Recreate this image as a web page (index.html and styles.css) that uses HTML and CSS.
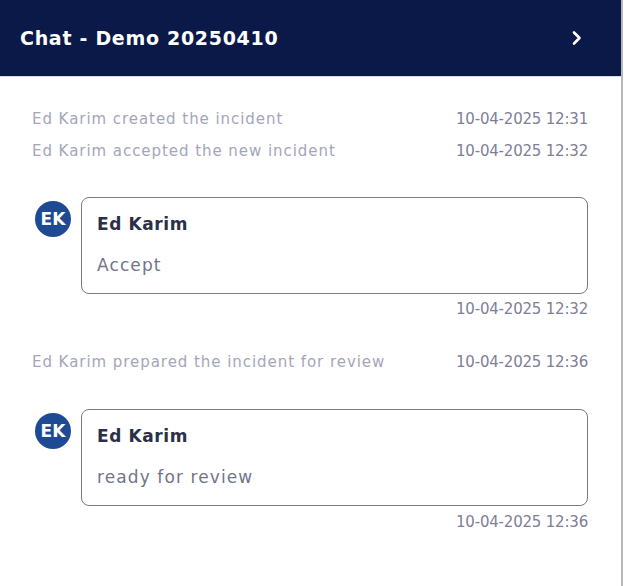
FILE: index.html
```html
<!DOCTYPE html>
<html>
<head>
<meta charset="utf-8">
<link rel="stylesheet" href="styles.css">
</head>
<body>
<div class="panel">
  <div class="header">
    <div class="title">Chat - Demo 20250410</div>
    <svg class="chev" width="12" height="16" viewBox="0 0 12 16"><path d="M3 2.5 L8.5 8 L3 13.5" fill="none" stroke="#ffffff" stroke-width="2.6" stroke-linecap="round" stroke-linejoin="round"/></svg>
  </div>
  <div class="content">
    <div class="sys"><span class="sys-text">Ed Karim created the incident</span><span class="time">10-04-2025 12:31</span></div>
    <div class="sys"><span class="sys-text">Ed Karim accepted the new incident</span><span class="time">10-04-2025 12:32</span></div>

    <div class="msg">
      <div class="avatar">EK</div>
      <div class="bubble">
        <div class="name">Ed Karim</div>
        <div class="text">Accept</div>
      </div>
    </div>
    <div class="msg-time">10-04-2025 12:32</div>

    <div class="sys sys-gap"><span class="sys-text">Ed Karim prepared the incident for review</span><span class="time">10-04-2025 12:36</span></div>

    <div class="msg msg-2">
      <div class="avatar">EK</div>
      <div class="bubble">
        <div class="name">Ed Karim</div>
        <div class="text">ready for review</div>
      </div>
    </div>
    <div class="msg-time msg-time-2">10-04-2025 12:36</div>
  </div>
</div>
</body>
</html>
```
FILE: styles.css
```css
html, body {
  margin: 0;
  padding: 0;
  background: #ffffff;
}
body {
  font-family: "DejaVu Sans", "Liberation Sans", sans-serif;
}
.panel {
  width: 623px;
  height: 586px;
  box-sizing: border-box;
  border-right: 2px solid #b9b9bd;
  background: #ffffff;
}
.header {
  height: 76px;
  background: #0a1947;
  display: flex;
  align-items: center;
  justify-content: space-between;
  padding: 0 38px 0 20px;
  border-bottom: 1px solid #d9dce4;
}
.title {
  color: #ffffff;
  font-weight: bold;
  font-size: 19px;
  letter-spacing: 0.7px;
}
.chev {
  display: block;
}
.content {
  padding: 26px 33px 0 32px;
}
.sys {
  display: flex;
  justify-content: space-between;
  align-items: center;
  height: 32px;
}
.sys-text {
  color: #a3a6ba;
  font-size: 15px;
  letter-spacing: 0.95px;
}
.time {
  color: #7d8098;
  font-size: 15px;
  letter-spacing: -0.2px;
}
.sys-gap {
  margin-top: 27px;
}
.msg {
  display: flex;
  align-items: flex-start;
  margin-top: 30px;
}
.msg-2 {
  margin-top: 31px;
}
.avatar {
  width: 36px;
  height: 36px;
  border-radius: 50%;
  background: #1e4a94;
  color: #ffffff;
  font-weight: bold;
  font-size: 17px;
  display: flex;
  align-items: center;
  justify-content: center;
  margin: 4px 10px 0 3px;
  flex-shrink: 0;
}
.bubble {
  flex: 1;
  border: 1.5px solid #7b7b7e;
  border-radius: 8px;
  padding: 14px 16px 16px 15px;
}
.name {
  font-weight: bold;
  font-size: 17px;
  line-height: 24px;
  letter-spacing: 0.6px;
  color: #2b3047;
}
.text {
  font-size: 17px;
  line-height: 24px;
  letter-spacing: 1.1px;
  color: #727588;
  margin-top: 17px;
}
.msg-time {
  text-align: right;
  font-size: 15px;
  line-height: 20px;
  letter-spacing: -0.2px;
  color: #7d8098;
  margin-top: 5px;
}
.msg-time-2 {
  margin-top: 6px;
}
```
